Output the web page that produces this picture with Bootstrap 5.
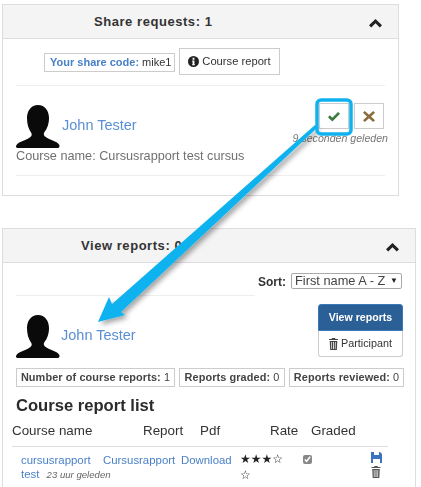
<!DOCTYPE html>
<html lang="en">
<head>
    <meta charset="UTF-8">
    <meta name="viewport" content="width=device-width, initial-scale=1.0">
    <title>Share requests</title>
    <link href="https://cdn.jsdelivr.net/npm/bootstrap@5.3.0/dist/css/bootstrap.min.css" rel="stylesheet">
    <style>
        html, body { height: 487px; overflow: hidden; }
        body { font-family: "Liberation Sans", Arial, sans-serif; background: #fff; color: #666; font-size: 12px; }

        .page-wrap { position: relative; height: 487px; overflow: hidden; padding: 4px 0 0 2px; filter: blur(.4px); }
        .arrow-layer { position: absolute; left: 0; top: 0; width: 421px; height: 487px; pointer-events: none; }

        .panel-box { border: 1px solid #ddd; border-radius: 0; background: #fff; }
        .panel-one { width: 397px; height: 192px; }
        .panel-two { width: 414px; height: 262px; margin-top: 32px; }
        .panel-head { height: 34px; background: #f4f4f4; border-bottom: 1px solid #ddd; position: relative; }
        .panel-head h2 { font-size: 13px; font-weight: 700; letter-spacing: .55px; color: #333; margin: 0; line-height: 33px; }
        .panel-one h2 { padding-left: 91px; }
        .panel-two h2 { padding-left: 78px; }
        .panel-chev { position: absolute; right: 16px; top: 14px; width: 13px; height: 9px; fill: #222; }

        .panel-pad { padding: 0 13px; }
        .code-row { height: 47px; padding-left: 28px; border-bottom: 1px solid #eee; gap: 4px; }
        .code-box { height: 19px; width: 131px; border: 1px solid #ccc; font-size: 11px; line-height: 17px; padding-left: 5px; font-weight: 700; color: #555; white-space: nowrap; }
        .code-box b { color: #4a80c8; }
        .code-box span { font-weight: 400; color: #333; }
        .btn-flat { border: 1px solid #ccc; border-radius: 0; background: #fff; color: #333; padding: 0; }
        .btn-course { width: 101px; height: 27px; font-size: 11.2px; margin-top: -1px; gap: 3px; }
        .btn-course svg { width: 11px; height: 11px; fill: #222; }

        .person-row { height: 90px; border-bottom: 1px solid #eee; position: relative; }
        .avatar-pic { width: 44px; height: 43px; fill: #0a0a0a; flex: none; }
        .person-name { font-size: 14.5px; color: #5a8fd4; text-decoration: none; }
        .person-top { padding-top: 19px; gap: 2px; }
        .person-top .person-name { margin-top: 10px; }
        .course-line { font-size: 12.7px; color: #707070; line-height: 15px; margin-top: 1px; white-space: nowrap; }
        .act-col { position: absolute; right: 1px; top: 17px; width: 96px; }
        .act-btns { gap: 5px; }
        .act-btn { width: 30px; height: 26px; }
        .act-btn svg { width: 12px; height: 11px; }
        .act-time { font-size: 10.6px; font-style: italic; color: #777; white-space: nowrap; line-height: 13px; margin-top: 3px; margin-right: -4px; }

        .sort-row { height: 32px; padding-top: 10px; gap: 5px; }
        .sort-row label { font-size: 12px; font-weight: 700; color: #333; margin: 0; }
        .sort-pick { width: 111px; height: 16px; border: 1px solid #aaa; border-radius: 2px; font-size: 12.8px; line-height: 14px; color: #444; padding: 0 3px; background: #fff; white-space: nowrap; }
        .sort-pick i { font-style: normal; font-size: 8px; color: #222; }
        .sort-rule { width: 239px; border-top: 1px solid #eee; }

        .view-row { height: 72px; }
        .view-person { padding-top: 19px; gap: 1px; }
        .view-person .person-name { margin-top: 10px; }
        .view-btns { width: 85px; padding-top: 8px; margin-right: -1px; }
        .btn-view { height: 27px; background: #2a6096; border: 1px solid #3a78b8; border-radius: 3px 3px 0 0; color: #fff; font-weight: 700; font-size: 10.6px; padding: 0; }
        .btn-part { height: 26px; border: 1px solid #ccc; border-top: 0; border-radius: 0 0 3px 3px; font-size: 10.8px; color: #333; background: #fff; padding: 0; gap: 3px; }
        .btn-part svg { width: 9px; height: 12px; fill: #444; }

        .stat-row { gap: 4px; margin-right: -7px; }
        .stat-box { height: 19px; border: 1px solid #ccc; font-size: 10.9px; font-weight: 700; color: #444; line-height: 17px; text-align: center; white-space: nowrap; letter-spacing: .1px; }
        .stat-box span { font-weight: 400; }
        .stat-a { width: 159px; }
        .stat-b { width: 106px; }
        .stat-c { width: 115px; }
        .list-title { font-size: 16.6px; font-weight: 700; color: #2b2b2b; margin: 9px 0 0; line-height: 20px; }

        .report-table { width: 376px; margin: 0 0 0 -4px; table-layout: fixed; border-collapse: collapse; }
        .report-table th { font-size: 13.4px; font-weight: 400; color: #333; height: 30px; padding: 1px 0 0; border-bottom: 1px solid #ddd; white-space: nowrap; }
        .report-table td { vertical-align: top; padding: 6px 0 0; font-size: 11.4px; line-height: 14px; white-space: nowrap; }
        .report-table a { color: #4a80c8; text-decoration: none; }
        .report-table small { font-size: 9.6px; font-style: italic; color: #666; margin-left: 4px; }
        .col-a { width: 91px; }
        .col-b { width: 78px; }
        .col-c { width: 57px; }
        .col-d { width: 62px; }
        .col-e { width: 65px; }
        .report-table .th-name { padding-left: 0; }
        .report-table .th-report { padding-left: 40px; }
        .report-table .th-pdf { padding-left: 19px; }
        .report-table .th-rate { padding-left: 32px; }
        .report-table .th-graded { padding-left: 11px; }
        .report-table .td-name { padding-left: 9px; }
        .report-table .td-star { font-family: "DejaVu Sans", sans-serif; font-size: 12px; color: #222; line-height: 16px; padding: 4px 0 0 2px; }
        .report-table .td-tick { padding: 8px 0 0 3px; }
        .tick-box { width: 9px; height: 9px; margin: 0; display: block; accent-color: #888; }
        .row-icons { display: flex; flex-direction: column; align-items: flex-start; gap: 3px; padding-left: 6px; margin-top: -1px; }
        .row-icons svg { width: 11px; height: 11px; }
        .row-icons svg + svg { width: 10px; height: 12px; }
    </style>
</head>
<body>
    <div class="page-wrap">
        <!-- Share requests -->
        <section class="panel-box panel-one">
            <div class="panel-head">
                <h2>Share requests: 1</h2>
                <svg class="panel-chev" viewBox="0 0 13 9"><path d="M6.500 0 13 6.300 10.800 8.500 6.500 4.300 2.200 8.500 0 6.300z"/></svg>
            </div>
            <div class="panel-pad">
                <div class="code-row d-flex align-items-center">
                    <div class="code-box"><b>Your share code:</b> <span>mike1</span></div>
                    <button type="button" class="btn btn-flat btn-course d-flex align-items-center justify-content-center">
                        <svg viewBox="0 0 12 12"><path fill-rule="evenodd" d="M6 0a6 6 0 1 1 0 12A6 6 0 0 1 6 0zM5 2v2h2V2zM4.500 5v1H5v3h-.5v1h3V9H7V5z"/></svg>
                        Course report
                    </button>
                </div>
                <div class="person-row">
                    <div class="person-top d-flex">
                        <svg class="avatar-pic" viewBox="0 0 44 43"><path d="M22 0c7 0 11 6 11 13 0 6-2 11-4.500 14-1.500 2-.5 4 2 5.500 4 2.500 10 3.500 12.500 7 1 1.500.5 3-1 3.500H1.500C0 43-.5 41.500.5 40c2.500-3.500 8.500-4.500 12.500-7 2.500-1.500 3.500-3.500 2-5.500C12.500 24 11 19 11 13 11 6 15 0 22 0z"/></svg>
                        <a class="person-name" href="#">John Tester</a>
                    </div>
                    <div class="course-line">Course name: Cursusrapport test cursus</div>
                    <div class="act-col d-flex flex-column align-items-end">
                        <div class="act-btns d-flex">
                            <button type="button" class="btn btn-flat act-btn d-flex align-items-center justify-content-center" aria-label="Accept">
                                <svg viewBox="0 0 12 11"><path fill="#3d7a3d" d="M4.300 10.500 0 6.200 1.900 4.300 4.300 6.700 10.100.9 12 2.800z"/></svg>
                            </button>
                            <button type="button" class="btn btn-flat act-btn d-flex align-items-center justify-content-center" aria-label="Reject">
                                <svg viewBox="0 0 12 11"><path fill="#8a6d3b" d="M1.800 0 6 3.700 10.200 0 12 1.800 8 5.500 12 9.200 10.200 11 6 7.300 1.800 11 0 9.200 4 5.500 0 1.800z"/></svg>
                            </button>
                        </div>
                        <div class="act-time">9 seconden geleden</div>
                    </div>
                </div>
            </div>
        </section>

        <!-- View reports -->
        <section class="panel-box panel-two">
            <div class="panel-head">
                <h2>View reports: 0</h2>
                <svg class="panel-chev" viewBox="0 0 13 9"><path d="M6.500 0 13 6.300 10.800 8.500 6.500 4.300 2.200 8.500 0 6.300z"/></svg>
            </div>
            <div class="panel-pad">
                <div class="sort-row d-flex justify-content-end">
                    <label>Sort:</label>
                    <div class="sort-pick d-flex justify-content-between align-items-center">First name A - Z <i>&#9660;</i></div>
                </div>
                <div class="sort-rule"></div>
                <div class="view-row d-flex justify-content-between">
                    <div class="view-person d-flex">
                        <svg class="avatar-pic" viewBox="0 0 44 43"><path d="M22 0c7 0 11 6 11 13 0 6-2 11-4.500 14-1.500 2-.5 4 2 5.500 4 2.500 10 3.500 12.500 7 1 1.500.5 3-1 3.500H1.500C0 43-.5 41.500.5 40c2.500-3.500 8.500-4.500 12.500-7 2.500-1.500 3.500-3.500 2-5.500C12.500 24 11 19 11 13 11 6 15 0 22 0z"/></svg>
                        <a class="person-name" href="#">John Tester</a>
                    </div>
                    <div class="view-btns d-flex flex-column">
                        <button type="button" class="btn btn-view">View reports</button>
                        <button type="button" class="btn btn-part d-flex align-items-center justify-content-center">
                            <svg viewBox="0 0 9 12"><path d="M3 0h3l.5 1H9v1H0V1h2.500zM.7 3h7.600l-.5 9H1.200zM2.200 4l.2 7h.7l-.2-7zM4.100 4v7h.8V4zM6 4l-.2 7h.7l.2-7z"/></svg>
                            Participant
                        </button>
                    </div>
                </div>
                <div class="stat-row d-flex">
                    <div class="stat-box stat-a">Number of course reports: <span>1</span></div>
                    <div class="stat-box stat-b">Reports graded: <span>0</span></div>
                    <div class="stat-box stat-c">Reports reviewed: <span>0</span></div>
                </div>
                <h3 class="list-title">Course report list</h3>
                <table class="report-table">
                    <colgroup><col class="col-a"><col class="col-b"><col class="col-c"><col class="col-d"><col class="col-e"><col></colgroup>
                    <thead>
                        <tr>
                            <th class="th-name">Course name</th>
                            <th class="th-report">Report</th>
                            <th class="th-pdf">Pdf</th>
                            <th class="th-rate">Rate</th>
                            <th class="th-graded">Graded</th>
                            <th></th>
                        </tr>
                    </thead>
                    <tbody>
                        <tr>
                            <td class="td-name"><a href="#">cursusrapport<br>test</a> <small>23 uur geleden</small></td>
                            <td><a href="#">Cursusrapport</a></td>
                            <td><a href="#">Download</a></td>
                            <td class="td-star">★★★☆<br>☆</td>
                            <td class="td-tick"><input class="tick-box" type="checkbox" checked aria-label="Graded"></td>
                            <td>
                                <div class="row-icons">
                                    <svg viewBox="0 0 11 11"><path fill="#3a74c0" fill-rule="evenodd" d="M0 0h9l2 2v9H0zM3 0v3h5V0zM2 7v4h7V7z"/></svg>
                                    <svg viewBox="0 0 9 12"><path fill="#555" d="M3 0h3l.5 1H9v1H0V1h2.500zM.7 3h7.600l-.5 9H1.200zM2.200 4l.2 7h.7l-.2-7zM4.100 4v7h.8V4zM6 4l-.2 7h.7l.2-7z"/></svg>
                                </div>
                            </td>
                        </tr>
                    </tbody>
                </table>
            </div>
        </section>

        <!-- callout drawn over the screenshot -->
        <svg class="arrow-layer" viewBox="0 0 421 487">
            <defs>
                <filter id="arrowShadow" x="-20%" y="-20%" width="150%" height="150%">
                    <feDropShadow dx="3" dy="3" stdDeviation="2.500" flood-color="#000" flood-opacity=".35"/>
                </filter>
            </defs>
            <path filter="url(#arrowShadow)" fill="#10b2ee" d="M98 322 109 297 112 304 315 125 317 128 121 312 125 315z"/>
            <rect x="317" y="100" width="34" height="34" rx="4" fill="none" stroke="#10b2ee" stroke-width="3.500"/>
        </svg>
    </div>

    <script src="https://cdn.jsdelivr.net/npm/bootstrap@5.3.0/dist/js/bootstrap.bundle.min.js"></script>
</body>
</html>
